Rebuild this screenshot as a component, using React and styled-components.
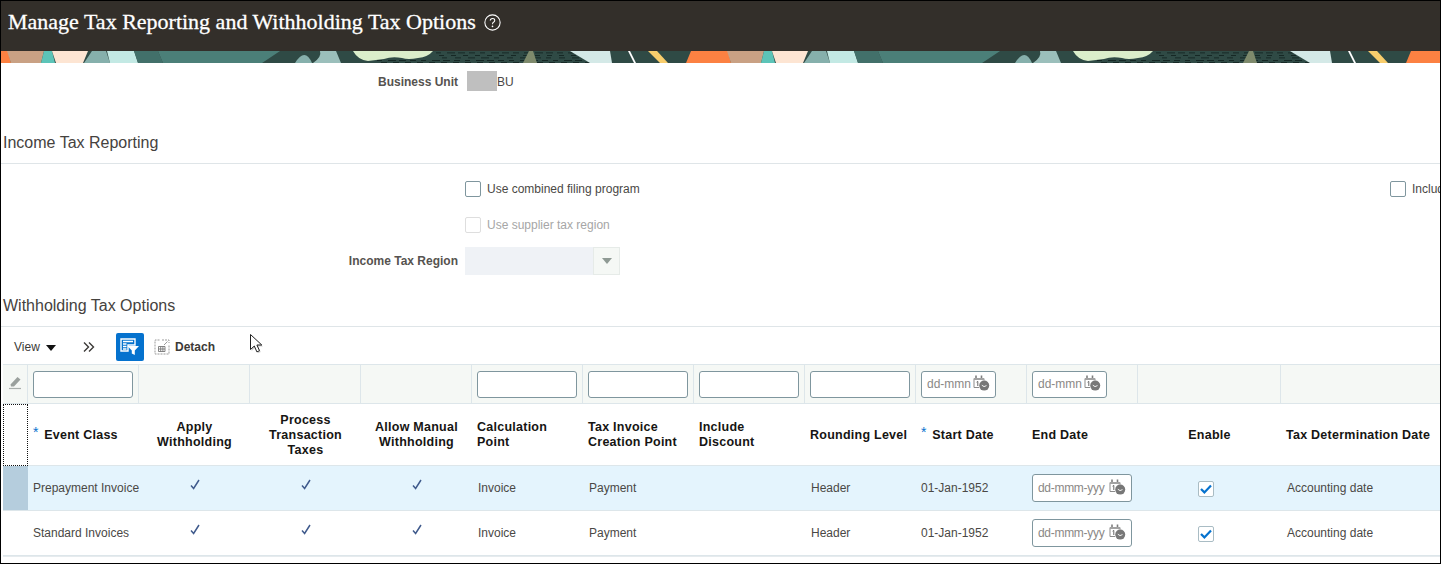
import React from "react";
import styled, { createGlobalStyle } from "styled-components";

const Global = createGlobalStyle`
  html, body { margin: 0; padding: 0; background: #fff; }
  body { font-family: "Liberation Sans", Arial, sans-serif; }
`;

const Frame = styled.div`
  box-sizing: border-box;
  width: 1441px;
  height: 564px;
  border: 1px solid #000;
  overflow: hidden;
  position: relative;
  background: #fff;
  color: #4a4845;
  font-size: 12px;
`;

const TitleBar = styled.header`
  height: 50px;
  background: #332f2a;
  display: flex;
  align-items: center;
  padding: 0 0 8px 7px;
  box-sizing: border-box;
  gap: 8px;
`;

const Title = styled.h1`
  margin: 0;
  font-family: "Liberation Serif", Georgia, serif;
  font-weight: 400;
  font-size: 22px;
  color: #fff;
  -webkit-text-stroke: 0.3px #fff;
  white-space: nowrap;
`;

const BannerSvg = styled.svg`
  display: block;
  width: 100%;
  height: 12px;
`;

const Form = styled.section`
  padding-top: 8px;
`;

const FieldRow = styled.div`
  display: grid;
  grid-template-columns: 457px 1fr;
  column-gap: 7px;
  align-items: center;
  height: ${(p) => p.$h}px;
  margin-top: ${(p) => p.$top || 0}px;
`;

const FieldLabel = styled.label`
  text-align: right;
  font-weight: 700;
  font-size: 12px;
  color: #56534f;
  padding-top: ${(p) => p.$drop || 0}px;
`;

const BuValue = styled.div`
  display: flex;
  align-items: center;
  font-size: 12px;
  color: #4a4845;
  padding-left: 2px;
`;

const BuText = styled.span`
  padding-top: 2px;
`;

const Redaction = styled.span`
  display: block;
  width: 30px;
  height: 20px;
  background: #bfbfbf;
`;

const SectionHead = styled.h2`
  margin: ${(p) => p.$top}px 0 0 2px;
  font-weight: 400;
  font-size: 16px;
  color: #45423e;
  line-height: 20px;
`;

const Rule = styled.div`
  height: 1px;
  background: #dfe5e8;
  margin-top: ${(p) => p.$top}px;
`;

const CheckGroup = styled.div`
  padding-top: 7px;
`;

const CheckCols = styled.div`
  display: grid;
  grid-template-columns: 925px 1fr;
  padding-left: 464px;
  white-space: nowrap;
  overflow: hidden;
`;

const CheckField = styled.div`
  display: flex;
  align-items: center;
  gap: 6px;
  height: 36px;
  font-size: 12px;
  color: ${(p) => (p.$off ? "#a6a6a6" : "#4a4845")};
`;

const Box = styled.span`
  box-sizing: border-box;
  flex: none;
  width: 16px;
  height: 16px;
  border-radius: 2px;
  background: #fff;
  border: 1px solid ${(p) => (p.$off ? "#dedede" : "#7f969e")};
  display: inline-flex;
  align-items: center;
  justify-content: center;
`;

const Select = styled.div`
  width: 155px;
  height: 28px;
  display: flex;
  background: #eff2f6;
`;

const SelectArrow = styled.div`
  margin-left: auto;
  width: 27px;
  background: #f5f8f5;
  border: 1px solid #e6ebe8;
  box-sizing: border-box;
  display: flex;
  align-items: center;
  justify-content: center;
`;

const Tri = styled.span`
  width: 0;
  height: 0;
  border-left: 5px solid transparent;
  border-right: 5px solid transparent;
  border-top: 6px solid #8f9a94;
`;

const Toolbar = styled.div`
  height: 37px;
  display: flex;
  align-items: center;
  padding: 3px 0 0 13px;
  box-sizing: border-box;
`;

const ViewMenu = styled.span`
  display: inline-flex;
  align-items: center;
  gap: 6px;
  font-size: 12px;
  color: #3c3a37;
  width: 69px;
`;

const ToolTri = styled.span`
  width: 0;
  height: 0;
  border-left: 5px solid transparent;
  border-right: 5px solid transparent;
  border-top: 6px solid #111;
  margin-top: 2px;
`;

const FilterBtn = styled.button`
  width: 28px;
  height: 28px;
  border: 0;
  padding: 0;
  margin-left: 20px;
  border-radius: 2px;
  background: #0572ce;
  display: flex;
  align-items: center;
  justify-content: center;
`;

const DetachBtn = styled.span`
  display: inline-flex;
  align-items: center;
  gap: 5px;
  margin-left: 10px;
  font-weight: 700;
  font-size: 12px;
  color: #3c3a37;
`;

const Cursor = styled.svg`
  position: absolute;
  left: 248px;
  top: 332px;
`;

const Table = styled.table`
  table-layout: fixed;
  border-collapse: separate;
  border-spacing: 0;
  width: 1437px;
  margin-left: 2px;
`;

const FilterCell = styled.td`
  height: 40px;
  padding: 0 0 0 5px;
  box-sizing: border-box;
  background: #f5f8f5;
  border-top: 1px solid #dde6ea;
  border-bottom: 1px solid #dde6ea;
  border-right: 1px solid #dde6ea;
  &:last-child { border-right: 0; }
`;

const ClearCell = styled(FilterCell)`
  padding: 0;
  text-align: center;
`;

const TextInput = styled.div`
  box-sizing: border-box;
  width: ${(p) => p.$w || 100}px;
  height: ${(p) => p.$h || 27}px;
  background: #fff;
  border: 1px solid #7f969e;
  border-radius: 3px;
  display: flex;
  align-items: center;
  justify-content: space-between;
  padding: 0 5px 0 5px;
  overflow: hidden;
  color: #8a8886;
  font-size: 12px;
  white-space: nowrap;
`;

const DateHint = styled.span`
  letter-spacing: ${(p) => (p.$tight ? "-0.3px" : "0")};
`;

const Th = styled.th`
  height: 62px;
  padding: 1px 0 0 5px;
  box-sizing: border-box;
  border-bottom: 1px solid #dde6ea;
  font-size: 12.5px;
  line-height: 15px;
  font-weight: 700;
  color: #161513;
  letter-spacing: 0.25px;
  text-align: ${(p) => (p.$c ? "center" : "left")};
  vertical-align: middle;
  ${(p) => p.$c && "padding: 1px 0 0;"}
`;

const SelectorHead = styled.th`
  box-sizing: border-box;
  padding: 0;
  border: 1px dotted #111;
`;

const Req = styled.span`
  color: #0572ce;
  font-weight: 400;
  font-size: 14px;
  line-height: 0;
  margin-right: 5.5px;
  position: relative;
  top: -2px;
`;

const Tr = styled.tr`
  background: ${(p) => (p.$sel ? "#e4f4fd" : "#fff")};
`;

const Td = styled.td`
  height: 45px;
  box-sizing: border-box;
  padding: 0 0 0 6px;
  border-bottom: 1px solid #dde6ea;
  font-size: 12px;
  color: #4a4845;
  white-space: nowrap;
  text-align: ${(p) => (p.$c ? "center" : "left")};
  ${(p) => p.$c && "padding: 0;"}
  ${(p) => p.$tight && "padding-left: 5px;"}
`;

const SelectorCell = styled.td`
  padding: 0;
  background: ${(p) => (p.$sel ? "#b5cddd" : "transparent")};
  border-bottom: 1px solid #dde6ea;
`;

const LastLine = styled.div`
  height: 1px;
  margin-left: 2px;
  background: #e6ebee;
`;

const Tick = styled.svg`
  display: block;
  margin: -7px auto 0;
`;

const CheckMark = () => (
  <Tick width="10" height="11" viewBox="0 0 10 11">
    <path d="M1 6.5 L3.6 9.4 L9 1" fill="none" stroke="#3f5a8c" strokeWidth="1.5" />
  </Tick>
);

const BlueBox = styled(Box)`
  margin: 0 auto;
  transform: translate(-4px, 1px);
  border-color: #a9bcc4;
`;

const BlueCheck = () => (
  <BlueBox>
    <svg width="12" height="10" viewBox="0 0 12 10">
      <path d="M1 5 L4.4 8.4 L11 1.4" fill="none" stroke="#0572ce" strokeWidth="2.2" />
    </svg>
  </BlueBox>
);

const CalendarClock = () => (
  <svg width="17" height="16" viewBox="0 0 17 16" style={{ flex: "none", marginTop: -3 }}>
    <path d="M1 3.5V12.5H6M1 3.5H11V5.5" fill="none" stroke="#8b8b8b" strokeWidth="1" />
    <path d="M3 0.5V3.5M8.5 0.5V3.5" stroke="#7d7d7d" strokeWidth="1.6" />
    <path d="M1 3H11V5H1Z" fill="#a2a2a2" />
    <path d="M3.6 7.2L4.8 6.4V11" fill="none" stroke="#666" strokeWidth="1" />
    <circle cx="11.2" cy="10.6" r="5" fill="#777" />
    <path d="M8.8 10.2L11 11.6L13.5 10.6" stroke="#fff" strokeWidth="0.9" fill="none" />
  </svg>
);

const Banner = () => {
  const dashes = [];
  const dashRows = [1.5, 4, 6.5, 9, 11];
  dashRows.forEach((y, r) => {
    const start = y > 8 ? 365 + r * 4 : 436 + r * 3;
    for (let x = start; x < 590; x += 11 + (r % 3)) {
      dashes.push(<rect key={`${r}-${x}`} x={x} y={y} width={5 + ((x + r) % 4)} height="0.8" fill="#0f1f1c" />);
    }
  });
  return (
    <BannerSvg viewBox="0 0 1439 12" preserveAspectRatio="none" aria-hidden="true">
      <defs>
        <pattern id="bn" x="-1" y="0" width="720" height="12" patternUnits="userSpaceOnUse">
          <rect width="720" height="12" fill="#2f4a45" />
          <polygon points="0,0 8,0 11,12 0,12" fill="#fc8142" />
          <polygon points="7,0 44,0 41,12 11,12" fill="#c9a184" />
          <polygon points="44,0 52,0 55,12 41,12" fill="#5cc4b8" />
          <polygon points="52,0 88,0 83,12 56,12" fill="#fde5d3" />
          <polygon points="92,0 106,0 110,12 84,12" fill="#86b0ac" />
          <polygon points="107,0 134,0 138,12 110,12" fill="#c3e9e4" />
          <polygon points="134,0 280,0 262,12 163,12 158,0" fill="#4b7f78" />
          <polygon points="134,0 158,0 163,12 138,12" fill="#42706a" />
          <path d="M295 12 Q305 -4 312 12Z" fill="#86b0ac" />
          <path d="M320 0 H336 L341 12 H313 Q322 6 320 0Z" fill="#9bbfbb" />
          {dashes}
          <path d="M353 0 H433 Q428 6 418 7 Q408 9 402 7 Q392 5 384 8 Q376 9 368 10 Q358 9 353 0Z" fill="#dbeecb" />
          <polygon points="529,0 533,0 537,12 523,12" fill="#7e8a6c" />
          <polygon points="570,0 610,0 612,12 590,12" fill="#d4e9e7" />
          <polygon points="628,0 630,0 636,12 634,12" fill="#fff" />
          <polygon points="648,0 657,0 668,12 660,12" fill="#f8cd6c" />
          <polygon points="691,0 720,0 720,12 686,12" fill="#fc8142" />
        </pattern>
      </defs>
      <rect width="1439" height="12" fill="url(#bn)" />
    </BannerSvg>
  );
};

const columns = [25, 111, 111, 111, 111, 111, 111, 111, 111, 111, 111, 143, 159];

const rows = [
  { name: "Prepayment Invoice", sel: true },
  { name: "Standard Invoices", sel: false },
];

export default function App() {
  return (
    <Frame>
      <Global />
      <TitleBar>
        <Title>Manage Tax Reporting and Withholding Tax Options</Title>
        <svg width="17" height="17" viewBox="0 0 16 16">
          <circle cx="8" cy="8" r="7.2" fill="none" stroke="#fff" strokeWidth="1" />
          <path d="M5.9 6.2 Q6 4.2 8 4.2 Q10.1 4.2 10.1 6 Q10.1 7.1 8.9 7.8 Q8 8.4 8 9.6" fill="none" stroke="#fff" strokeWidth="1" />
          <circle cx="8" cy="11.6" r="0.8" fill="#fff" />
        </svg>
      </TitleBar>
      <Banner />
      <Form>
        <FieldRow $h={20}>
          <FieldLabel $drop={2}>Business Unit</FieldLabel>
          <BuValue>
            <Redaction />
            <BuText>BU</BuText>
          </BuValue>
        </FieldRow>
        <SectionHead $top={42}>Income Tax Reporting</SectionHead>
        <Rule $top={10} />
        <CheckGroup>
          <CheckCols>
            <CheckField>
              <Box />
              Use combined filing program
            </CheckField>
            <CheckField>
              <Box />
              Include
            </CheckField>
          </CheckCols>
          <CheckCols>
            <CheckField $off>
              <Box $off />
              Use supplier tax region
            </CheckField>
          </CheckCols>
        </CheckGroup>
        <FieldRow $h={28} $top={4}>
          <FieldLabel>Income Tax Region</FieldLabel>
          <Select>
            <SelectArrow>
              <Tri />
            </SelectArrow>
          </Select>
        </FieldRow>
        <SectionHead $top={21}>Withholding Tax Options</SectionHead>
        <Rule $top={10} />
      </Form>
      <Toolbar>
        <ViewMenu>
          View
          <ToolTri />
        </ViewMenu>
        <svg width="14" height="12" viewBox="0 0 14 12" style={{ marginLeft: -1 }}>
          <path d="M2 1.5L6.5 6L2 10.5M7 1.5L11.5 6L7 10.5" fill="none" stroke="#3c3a37" strokeWidth="1.4" />
        </svg>
        <FilterBtn aria-label="Query by example">
          <svg width="20" height="18" viewBox="0 0 20 18">
            <path d="M1 1H15V7H8V13H1Z" fill="none" stroke="#fff" strokeWidth="1.4" />
            <path d="M3 3.5H13M3 6H6.5M3 8.5H6.5M3 11H6.5" stroke="#fff" strokeWidth="1.3" />
            <path d="M7.5 8H19L14.8 12.5V17L11.8 15.5V12.5Z" fill="#fff" />
          </svg>
        </FilterBtn>
        <DetachBtn>
          <svg width="16" height="16" viewBox="0 0 16 16">
            <path d="M5.5 1H1V15H15V6" fill="none" stroke="#9b9b9b" strokeDasharray="2 1" />
            <path d="M8 1H15V4" fill="none" stroke="#9b9b9b" strokeDasharray="2 1" />
            <path d="M4.5 7.5H11V12.5H4.5ZM4.5 10H11M6.7 7.5V12.5M8.9 7.5V12.5" fill="none" stroke="#777" strokeWidth="0.9" />
            <path d="M10 6L13.5 2.5" stroke="#9b9b9b" />
          </svg>
          Detach
        </DetachBtn>
      </Toolbar>
      <Cursor width="16" height="22" viewBox="0 0 16 22">
        <path d="M2.6 2.6V18L6.4 14.6L9 20.2L11.8 19L9.2 13.6H14Z" fill="#000" opacity="0.18" />
        <path d="M1.5 1.5V16.5L5.3 13L7.9 18.9L10.5 17.7L7.9 12H12.8Z" fill="#fff" stroke="#222" strokeWidth="1" />
      </Cursor>
      <Table>
        <colgroup>
          {columns.map((w, i) => (
            <col key={i} style={{ width: w }} />
          ))}
        </colgroup>
        <tbody>
          <tr>
            <ClearCell>
              <svg width="14" height="15" viewBox="0 0 14 15">
                <path d="M2.5 9.5L9.5 2L12.5 4.6L6 11.4H3Z" fill="#9aa09d" />
                <path d="M1 13.5H13" stroke="#a9afac" strokeWidth="1.2" />
              </svg>
            </ClearCell>
            <FilterCell><TextInput /></FilterCell>
            <FilterCell />
            <FilterCell />
            <FilterCell />
            <FilterCell><TextInput /></FilterCell>
            <FilterCell><TextInput /></FilterCell>
            <FilterCell><TextInput /></FilterCell>
            <FilterCell><TextInput /></FilterCell>
            <FilterCell><TextInput $w={75}><DateHint>dd-mmn</DateHint><CalendarClock /></TextInput></FilterCell>
            <FilterCell><TextInput $w={75}><DateHint>dd-mmn</DateHint><CalendarClock /></TextInput></FilterCell>
            <FilterCell />
            <FilterCell />
          </tr>
          <tr>
            <SelectorHead />
            <Th><Req>*</Req>Event Class</Th>
            <Th $c>Apply<br />Withholding</Th>
            <Th $c>Process<br />Transaction<br />Taxes</Th>
            <Th $c>Allow Manual<br />Withholding</Th>
            <Th>Calculation<br />Point</Th>
            <Th>Tax Invoice<br />Creation Point</Th>
            <Th>Include<br />Discount</Th>
            <Th>Rounding Level</Th>
            <Th><Req>*</Req>Start Date</Th>
            <Th>End Date</Th>
            <Th $c>Enable</Th>
            <Th>Tax Determination Date</Th>
          </tr>
          {rows.map((r) => (
            <Tr key={r.name} $sel={r.sel}>
              <SelectorCell $sel={r.sel} />
              <Td $tight>{r.name}</Td>
              <Td $c><CheckMark /></Td>
              <Td $c><CheckMark /></Td>
              <Td $c><CheckMark /></Td>
              <Td>Invoice</Td>
              <Td>Payment</Td>
              <Td />
              <Td>Header</Td>
              <Td $tight>01-Jan-1952</Td>
              <Td $tight><TextInput $w={100} $h={28}><DateHint $tight>dd-mmm-yyy</DateHint><CalendarClock /></TextInput></Td>
              <Td $c><BlueCheck /></Td>
              <Td>Accounting date</Td>
            </Tr>
          ))}
        </tbody>
      </Table>
      <LastLine />
    </Frame>
  );
}
